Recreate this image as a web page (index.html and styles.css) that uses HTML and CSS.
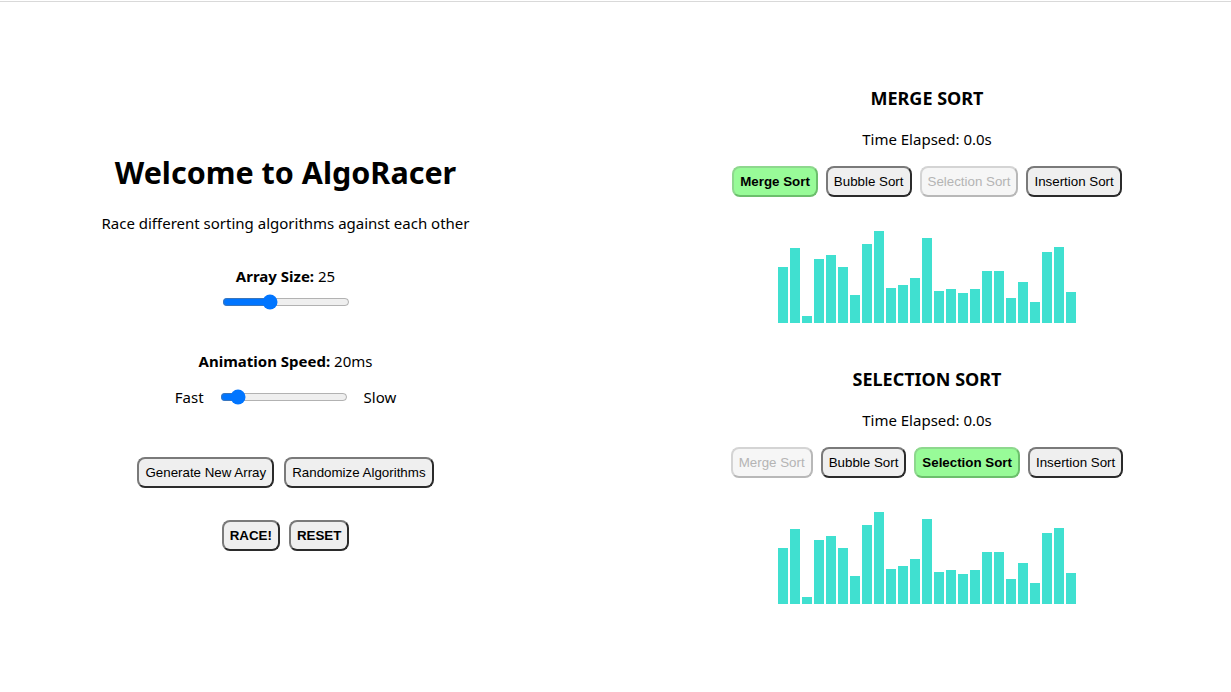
FILE: index.html
```html
<!DOCTYPE html>
<html lang="en">
<head>
<meta charset="utf-8">
<title>AlgoRacer</title>
<link rel="stylesheet" href="styles.css">
</head>
<body>
<div class="app">
  <div class="controls">
    <h1 class="title">Welcome to AlgoRacer</h1>
    <p class="subtitle">Race different sorting algorithms against each other</p>
    <div class="control-group size-group">
      <div class="label"><strong>Array Size:</strong> 25</div>
      <input class="slider" type="range" min="5" max="60" value="25">
    </div>
    <div class="control-group speed-group">
      <div class="label"><strong>Animation Speed:</strong> 20ms</div>
      <div class="speed-row">
        <span>Fast</span>
        <input class="slider" type="range" min="1" max="200" value="20">
        <span>Slow</span>
      </div>
    </div>
    <div class="btn-row gen-row">
      <button class="btn">Generate New Array</button>
      <button class="btn">Randomize Algorithms</button>
    </div>
    <div class="btn-row race-row">
      <button class="btn bold">RACE!</button>
      <button class="btn bold">RESET</button>
    </div>
  </div>

  <div class="races">
    <section class="race">
      <h2 class="race-title">MERGE SORT</h2>
      <p class="timer">Time Elapsed: 0.0s</p>
      <div class="algo-row">
        <button class="btn selected">Merge Sort</button>
        <button class="btn">Bubble Sort</button>
        <button class="btn" disabled>Selection Sort</button>
        <button class="btn">Insertion Sort</button>
      </div>
      <div class="bars">
        <div class="bar" style="height:56px"></div>
        <div class="bar" style="height:75px"></div>
        <div class="bar" style="height:7px"></div>
        <div class="bar" style="height:64px"></div>
        <div class="bar" style="height:68px"></div>
        <div class="bar" style="height:56px"></div>
        <div class="bar" style="height:28px"></div>
        <div class="bar" style="height:79px"></div>
        <div class="bar" style="height:92px"></div>
        <div class="bar" style="height:35px"></div>
        <div class="bar" style="height:38px"></div>
        <div class="bar" style="height:45px"></div>
        <div class="bar" style="height:85px"></div>
        <div class="bar" style="height:32px"></div>
        <div class="bar" style="height:34px"></div>
        <div class="bar" style="height:30px"></div>
        <div class="bar" style="height:34px"></div>
        <div class="bar" style="height:52px"></div>
        <div class="bar" style="height:52px"></div>
        <div class="bar" style="height:25px"></div>
        <div class="bar" style="height:41px"></div>
        <div class="bar" style="height:21px"></div>
        <div class="bar" style="height:71px"></div>
        <div class="bar" style="height:76px"></div>
        <div class="bar" style="height:31px"></div>
      </div>
    </section>

    <section class="race">
      <h2 class="race-title">SELECTION SORT</h2>
      <p class="timer">Time Elapsed: 0.0s</p>
      <div class="algo-row">
        <button class="btn" disabled>Merge Sort</button>
        <button class="btn">Bubble Sort</button>
        <button class="btn selected">Selection Sort</button>
        <button class="btn">Insertion Sort</button>
      </div>
      <div class="bars">
        <div class="bar" style="height:56px"></div>
        <div class="bar" style="height:75px"></div>
        <div class="bar" style="height:7px"></div>
        <div class="bar" style="height:64px"></div>
        <div class="bar" style="height:68px"></div>
        <div class="bar" style="height:56px"></div>
        <div class="bar" style="height:28px"></div>
        <div class="bar" style="height:79px"></div>
        <div class="bar" style="height:92px"></div>
        <div class="bar" style="height:35px"></div>
        <div class="bar" style="height:38px"></div>
        <div class="bar" style="height:45px"></div>
        <div class="bar" style="height:85px"></div>
        <div class="bar" style="height:32px"></div>
        <div class="bar" style="height:34px"></div>
        <div class="bar" style="height:30px"></div>
        <div class="bar" style="height:34px"></div>
        <div class="bar" style="height:52px"></div>
        <div class="bar" style="height:52px"></div>
        <div class="bar" style="height:25px"></div>
        <div class="bar" style="height:41px"></div>
        <div class="bar" style="height:21px"></div>
        <div class="bar" style="height:71px"></div>
        <div class="bar" style="height:76px"></div>
        <div class="bar" style="height:31px"></div>
      </div>
    </section>
  </div>
</div>
</body>
</html>
```

FILE: styles.css
```css
* {
  box-sizing: border-box;
}

html, body {
  margin: 0;
  background: #ffffff;
}

body {
  padding-top: 1px;
  font-family: "Noto Sans", "Open Sans", sans-serif;
  font-size: 16px;
  color: #000;
}

.app {
  border-top: 1px solid #d9d9d9;
  min-height: 690px;
  display: grid;
  grid-template-columns: 571px 1fr;
  column-gap: 52px;
  align-items: center;
}

/* ---------- left controls ---------- */
.controls {
  display: flex;
  flex-direction: column;
  align-items: center;
  text-align: center;
  padding-top: 11px;
  padding-bottom: 1px;
}

.title {
  margin: 0;
  font-size: 30.5px;
  line-height: 40px;
  font-weight: 700;
}

.subtitle {
  margin: 19px 0 0;
  font-size: 15px;
  line-height: 24px;
}

.control-group {
  display: flex;
  flex-direction: column;
  align-items: center;
}

.size-group {
  margin-top: 29px;
}

.speed-group {
  margin-top: 39px;
}

.label {
  font-size: 15px;
  line-height: 24px;
}

.slider {
  display: block;
  width: 128px;
  height: 16px;
  margin: 0;
}

.size-group .slider {
  margin-top: 6px;
}

.speed-row {
  margin-top: 12px;
  display: flex;
  align-items: center;
  gap: 16px;
  font-size: 15px;
  line-height: 24px;
}

.btn-row {
  display: flex;
  justify-content: center;
  gap: 10px;
}

.gen-row {
  margin-top: 48px;
}

.race-row {
  margin-top: 32px;
  gap: 9px;
}

/* ---------- buttons ---------- */
.btn {
  font-family: "Liberation Sans", Arial, sans-serif;
  font-size: 13.333px;
  line-height: 15px;
  padding: 6px 6px;
  background: #efefef;
  color: #000;
  border: 2px solid;
  border-color: #7a7a7a #2b2b2b #2b2b2b #7a7a7a;
  border-radius: 8px;
  margin: 0;
}

.btn.bold {
  font-weight: 700;
}

.btn.selected {
  background: #98fb98;
  font-weight: 700;
  border-color: #8ed88e #6cbf6c #6cbf6c #8ed88e;
}

.btn:disabled {
  background: #f6f6f6;
  color: #b4b4b4;
  border-color: #d4d4d4 #b8b8b8 #b8b8b8 #d4d4d4;
}

/* ---------- races ---------- */
.races {
  display: flex;
  flex-direction: column;
  align-items: center;
  gap: 44px;
  padding-bottom: 4px;
}

.race {
  display: flex;
  flex-direction: column;
  align-items: center;
}

.race-title {
  margin: 0;
  font-size: 18px;
  line-height: 24px;
  font-weight: 700;
}

.timer {
  margin: 17px 0 0;
  font-size: 15px;
  line-height: 24px;
}

.algo-row {
  margin-top: 15px;
  display: flex;
  gap: 8px;
}

.bars {
  margin-top: 26px;
  height: 100px;
  display: flex;
  align-items: flex-end;
  gap: 2px;
}

.bar {
  width: 10px;
  background: #40e0d0;
}
```
